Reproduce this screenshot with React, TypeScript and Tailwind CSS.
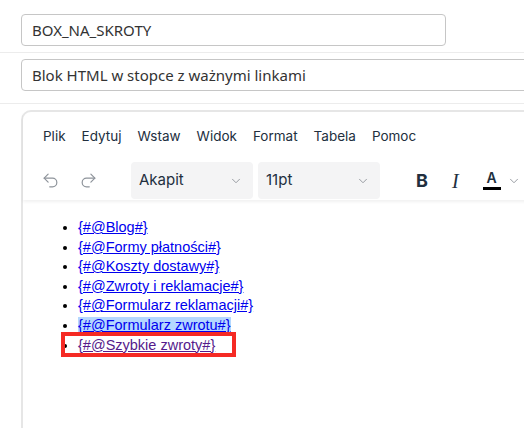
import { Undo2, Redo2, ChevronDown } from 'lucide-react'

const menu = ['Plik', 'Edytuj', 'Wstaw', 'Widok', 'Format', 'Tabela', 'Pomoc']

const links = [
  '{#@Blog#}',
  '{#@Formy płatności#}',
  '{#@Koszty dostawy#}',
  '{#@Zwroty i reklamacje#}',
  '{#@Formularz reklamacji#}',
  '{#@Formularz zwrotu#}',
  '{#@Szybkie zwroty#}',
]

function Select({ label }: { label: string }) {
  return (
    <div className="flex h-[37px] w-[122px] items-center justify-between rounded-[4px] bg-[#f4f4f5] pl-[8px] pr-[10px] text-[15px] text-[#222f3e]">
      <span>{label}</span>
      <ChevronDown size={14} strokeWidth={1.5} className="text-[#8a8f96]" />
    </div>
  )
}

export default function App() {
  return (
    <div className="h-[428px] w-[524px] overflow-hidden bg-white">
      <div className="px-[21px] pt-[14px] pb-[6px] font-['Noto_Sans',sans-serif]">
        <div className="flex h-[32px] w-[425px] items-center rounded-[4px] border border-[#c6c6c6] px-[10px] text-[15px] text-[#333]">
          BOX_NA_SKROTY
        </div>
      </div>
      <div className="border-t border-[#ececec]" />
      <div className="pt-[6px] pb-[12px] pl-[21px] font-['Noto_Sans',sans-serif]">
        <div className="flex h-[32px] w-[560px] items-center rounded-[4px] border border-[#c6c6c6] px-[10px] text-[15px] text-[#333]">
          Blok HTML w stopce z ważnymi linkami
        </div>
      </div>
      <div className="border-t border-[#ececec]" />

      <div className="ml-[21px] mt-[6px] h-[400px] w-[560px] rounded-tl-[10px] border-2 border-[#e6e6e6] font-['Inter',sans-serif]">
        <div className="relative z-10 shadow-[0_2px_3px_rgba(0,0,0,0.06)]">
          <div className="flex gap-[16px] pl-[20px] pt-[12px] text-[13.5px] text-[#222f3e]">
            {menu.map(m => (
              <span key={m} className="leading-[24px]">{m}</span>
            ))}
          </div>
          <div className="flex items-center pt-[14px] pb-[1px] pl-[18px]">
            <Undo2 size={19} strokeWidth={1.5} className="text-[#8d939a]" />
            <Redo2 size={19} strokeWidth={1.5} className="ml-[19px] text-[#8d939a]" />
            <div className="ml-[33px] flex gap-[5px]">
              <Select label="Akapit" />
              <Select label="11pt" />
            </div>
            <span className="ml-[36px] text-[18px] font-bold text-[#222f3e]">B</span>
            <span className="ml-[24px] font-['Liberation_Serif',serif] text-[20px] italic text-[#222f3e]">I</span>
            <div className="ml-[24px] flex flex-col items-center">
              <span className="text-[14px] font-semibold leading-[14px] text-[#222f3e]">A</span>
              <div className="mt-[2px] h-[3px] w-[18px] bg-black" />
            </div>
            <ChevronDown size={14} strokeWidth={1.5} className="ml-[6px] text-[#8a8f96]" />
          </div>
        </div>

        <ul className="mt-[18px] list-disc pl-[55px] font-['Liberation_Sans',sans-serif] text-[14.5px] leading-[19.6px]">
          {links.map((l, i) => (
            <li key={l} className={i === 6 ? 'relative' : ''}>
              <a
                href="#"
                className={
                  (i === 6 ? 'text-[#551a8b] ' : 'text-[#0000ee] ') +
                  'underline ' +
                  (i === 5 ? 'bg-[#b4d7ff]' : '')
                }
              >
                {l}
              </a>
              {i === 6 && (
                <span className="pointer-events-none absolute left-[-17px] top-[-4px] h-[25px] w-[175px] border-[4px] border-[#f52a24]" />
              )}
            </li>
          ))}
        </ul>
      </div>
    </div>
  )
}
